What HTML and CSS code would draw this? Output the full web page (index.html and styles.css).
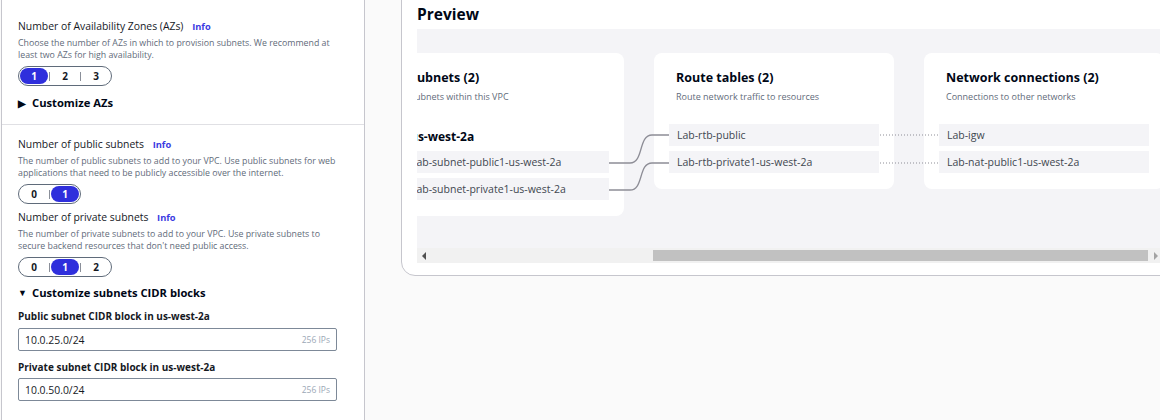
FILE: index.html
```html
<!DOCTYPE html>
<html lang="en">
<head>
<meta charset="utf-8">
<title>VPC settings</title>
<link rel="stylesheet" href="styles.css">
</head>
<body>
<div class="page">
  <aside class="form">
    <section class="sec sec-az">
      <div class="label">Number of Availability Zones (AZs) <a class="info">Info</a></div>
      <p class="desc">Choose the number of AZs in which to provision subnets. We recommend at<br>least two AZs for high availability.</p>
      <div class="seg">
        <span class="opt on">1</span><span class="sep"></span><span class="opt">2</span><span class="sep"></span><span class="opt">3</span>
      </div>
      <div class="expander"><span class="caret">&#9654;</span>Customize AZs</div>
    </section>
    <section class="sec sec-sub">
      <div class="label">Number of public subnets <a class="info">Info</a></div>
      <p class="desc">The number of public subnets to add to your VPC. Use public subnets for web<br>applications that need to be publicly accessible over the internet.</p>
      <div class="seg">
        <span class="opt">0</span><span class="sep"></span><span class="opt on">1</span>
      </div>
      <div class="label label-2">Number of private subnets <a class="info">Info</a></div>
      <p class="desc">The number of private subnets to add to your VPC. Use private subnets to<br>secure backend resources that don't need public access.</p>
      <div class="seg">
        <span class="opt">0</span><span class="sep"></span><span class="opt on">1</span><span class="sep"></span><span class="opt">2</span>
      </div>
      <div class="expander exp-2"><span class="caret down">&#9660;</span>Customize subnets CIDR blocks</div>
      <div class="field-label">Public subnet CIDR block in us-west-2a</div>
      <div class="input"><span>10.0.25.0/24</span><span class="hint">256 IPs</span></div>
      <div class="field-label fl-2">Private subnet CIDR block in us-west-2a</div>
      <div class="input input-2"><span>10.0.50.0/24</span><span class="hint">256 IPs</span></div>
    </section>
  </aside>

  <main class="preview">
    <h2 class="ptitle">Preview</h2>
    <div class="viewport">
      <div class="canvas">
        <div class="card card-subnets">
          <div class="chead">
            <div class="ctitle">Subnets (2)</div>
            <div class="csub">Subnets within this VPC</div>
          </div>
          <div class="azhead">us-west-2a</div>
          <div class="row">Lab-subnet-public1-us-west-2a</div>
          <div class="row">Lab-subnet-private1-us-west-2a</div>
        </div>
        <div class="card">
          <div class="chead">
            <div class="ctitle">Route tables (2)</div>
            <div class="csub">Route network traffic to resources</div>
          </div>
          <div class="rows">
            <div class="row">Lab-rtb-public</div>
            <div class="row">Lab-rtb-private1-us-west-2a</div>
          </div>
        </div>
        <div class="card">
          <div class="chead">
            <div class="ctitle">Network connections (2)</div>
            <div class="csub">Connections to other networks</div>
          </div>
          <div class="rows">
            <div class="row">Lab-igw</div>
            <div class="row">Lab-nat-public1-us-west-2a</div>
          </div>
        </div>
        <svg class="links" width="560" height="200" viewBox="0 0 560 200">
          <path d="M192 134 H213 C227 134 221 106 235 106 H252" fill="none" stroke="#8d8d96" stroke-width="1.3"/>
          <path d="M192 161 H213 C227 161 221 134 235 134 H252" fill="none" stroke="#8d8d96" stroke-width="1.3"/>
          <line x1="463" y1="106" x2="521" y2="106" stroke="#8d8d96" stroke-width="1" stroke-dasharray="1 2"/>
          <line x1="463" y1="134" x2="521" y2="134" stroke="#8d8d96" stroke-width="1" stroke-dasharray="1 2"/>
        </svg>
      </div>
    </div>
    <div class="scrollbar">
      <span class="arrow left"></span>
      <span class="thumb"></span>
      <span class="arrow right"></span>
    </div>
  </main>
</div>
</body>
</html>
```

FILE: styles.css
```css
* { box-sizing: border-box; }
html, body { margin: 0; padding: 0; }
body {
  background: #fafafa;
  font-family: "Open Sans", "Noto Sans", sans-serif;
  color: #16191f;
  width: 1160px;
  height: 420px;
  overflow: hidden;
}
.page {
  display: flex;
  align-items: flex-start;
  padding-left: 1px;
}

/* ---------- left form ---------- */
.form {
  width: 364px;
  height: 460px;
  margin-top: -20px;
  background: #fff;
  border: 1px solid #c6c6cd;
  flex: none;
}
.sec { padding: 0 16px; }
.sec-az {
  padding-top: 37px;
  padding-bottom: 13px;
  border-bottom: 1px solid #e0e0e4;
}
.sec-sub { padding-top: 11px; }

.label {
  font-size: 10.4px;
  line-height: 16px;
  color: #16191f;
}
.label-2 { margin-top: 5px; }
.info {
  color: #3b3be2;
  font-weight: 700;
  font-size: 9.3px;
  margin-left: 6px;
}
.desc {
  margin: 2px 0 0;
  font-size: 8.8px;
  line-height: 12px;
  color: #5f6b7a;
}
.seg {
  display: flex;
  width: max-content;
  align-items: center;
  margin-top: 5px;
  height: 20px;
  padding: 0 1px;
  border: 1px solid #5f6b7a;
  border-radius: 10px;
}
.opt {
  width: 28px;
  height: 16px;
  border-radius: 8px;
  display: flex;
  align-items: center;
  justify-content: center;
  font-size: 10px;
  font-weight: 700;
  color: #16191f;
}
.opt.on {
  background: #2f2fdc;
  color: #fff;
}
.sep {
  width: 1px;
  height: 9px;
  background: #8a8f99;
  margin: 0 1px;
}

.expander {
  margin-top: 9px;
  font-size: 11.2px;
  line-height: 16px;
  font-weight: 700;
  color: #000716;
  display: flex;
  align-items: center;
}
.exp-2 { margin-top: 8px; }
.caret {
  font-size: 10px;
  width: 14px;
  display: inline-block;
}
.caret.down { font-size: 9px; }
.field-label {
  margin-top: 7px;
  font-size: 10px;
  line-height: 16px;
  font-weight: 700;
  color: #16191f;
}
.fl-2 { margin-top: 8px; }
.input {
  margin-top: 4px;
  width: 319px;
  height: 23px;
  border: 1px solid #7d8998;
  border-radius: 2px;
  display: flex;
  align-items: center;
  justify-content: space-between;
  padding: 0 6px 0 6px;
  font-size: 10.4px;
  color: #16191f;
}
.input-2 { margin-top: 3px; }
.hint {
  font-size: 8.5px;
  color: #9ba7b6;
}

/* ---------- preview ---------- */
.preview {
  margin-left: 36px;
  margin-top: -20px;
  width: 820px;
  flex: none;
  background: #fff;
  border: 1px solid #c6c6cd;
  border-radius: 0 0 0 14px;
  padding: 23px 0 12px 15px;
}
.ptitle {
  margin: 0;
  font-size: 15.5px;
  line-height: 20px;
  font-weight: 700;
  color: #000716;
}
.viewport {
  margin-top: 5px;
  height: 219px;
  background: #f4f4f7;
  overflow: hidden;
}
.canvas {
  position: relative;
  display: flex;
  align-items: flex-start;
  gap: 30px;
  padding-top: 24px;
  margin-left: -29px;
}
.card {
  width: 240px;
  flex: none;
  background: #fff;
  border-radius: 8px;
  padding: 16px 15px 16px;
}
.card-subnets { width: 236px; }
.chead { padding: 0 7px; }
.ctitle {
  font-size: 12.5px;
  line-height: 18px;
  font-weight: 700;
  color: #000716;
}
.csub {
  margin-top: 3px;
  font-size: 9px;
  line-height: 14px;
  color: #5f6b7a;
}
.rows { margin-top: 20px; }
.azhead {
  margin-top: 26px;
  padding: 0 7px;
  font-size: 12px;
  line-height: 14px;
  font-weight: 700;
  color: #000716;
}
.card-subnets .azhead + .row { margin-top: 7px; }
.row {
  height: 22px;
  background: #f4f4f7;
  padding: 0 8px 1px;
  display: flex;
  align-items: center;
  font-size: 10.5px;
  color: #414750;
  white-space: nowrap;
}
.row + .row { margin-top: 5px; }
.links {
  position: absolute;
  left: 29px;
  top: 0;
  pointer-events: none;
}

.scrollbar {
  height: 15px;
  background: #f1f1f1;
  display: flex;
  align-items: center;
  position: relative;
}
.thumb {
  position: absolute;
  left: 236px;
  width: 495px;
  top: 2px;
  height: 11px;
  background: #c1c1c1;
}
.arrow {
  position: absolute;
  top: 4px;
  width: 0;
  height: 0;
  border-top: 4px solid transparent;
  border-bottom: 4px solid transparent;
}
.arrow.left {
  left: 5px;
  border-right: 4px solid #505050;
}
.arrow.right {
  left: 737px;
  border-left: 4px solid #a3a3a3;
}
```
